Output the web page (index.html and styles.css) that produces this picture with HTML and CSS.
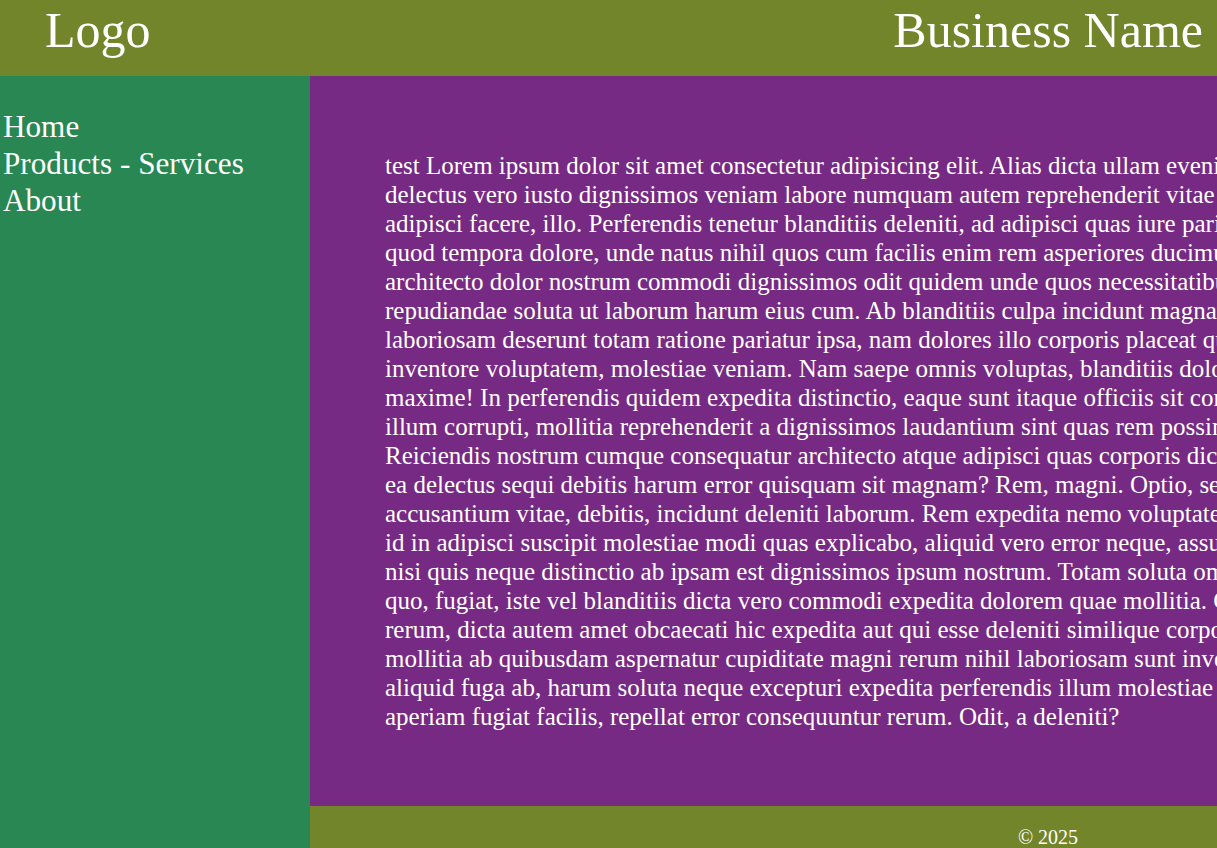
FILE: index.html
```html
<!DOCTYPE html>
<html lang="en">
<head>
<meta charset="utf-8">
<title>Business Name</title>
<link rel="stylesheet" href="styles.css">
</head>
<body>
<header class="site-header">
  <div class="logo">Logo</div>
  <div class="business-name">Business Name</div>
</header>
<div class="layout">
  <aside class="sidebar">
    <nav>
      <ul class="nav-list">
        <li><a href="#">Home</a></li>
        <li><a href="#">Products - Services</a></li>
        <li><a href="#">About</a></li>
      </ul>
    </nav>
  </aside>
  <div class="content-column">
    <main class="main">
      <p class="body-text">test Lorem ipsum dolor sit amet consectetur adipisicing elit. Alias dicta ullam eveniet nemo dolorum<br>
delectus vero iusto dignissimos veniam labore numquam autem reprehenderit vitae fuga quia<br>
adipisci facere, illo. Perferendis tenetur blanditiis deleniti, ad adipisci quas iure pariatur<br>
quod tempora dolore, unde natus nihil quos cum facilis enim rem asperiores ducimus<br>
architecto dolor nostrum commodi dignissimos odit quidem unde quos necessitatibus<br>
repudiandae soluta ut laborum harum eius cum. Ab blanditiis culpa incidunt magnam<br>
laboriosam deserunt totam ratione pariatur ipsa, nam dolores illo corporis placeat quis<br>
inventore voluptatem, molestiae veniam. Nam saepe omnis voluptas, blanditiis dolor<br>
maxime! In perferendis quidem expedita distinctio, eaque sunt itaque officiis sit corporis<br>
illum corrupti, mollitia reprehenderit a dignissimos laudantium sint quas rem possimus<br>
Reiciendis nostrum cumque consequatur architecto atque adipisci quas corporis dicta<br>
ea delectus sequi debitis harum error quisquam sit magnam? Rem, magni. Optio, sed<br>
accusantium vitae, debitis, incidunt deleniti laborum. Rem expedita nemo voluptatem<br>
id in adipisci suscipit molestiae modi quas explicabo, aliquid vero error neque, assumenda<br>
nisi quis neque distinctio ab ipsam est dignissimos ipsum nostrum. Totam soluta omnis<br>
quo, fugiat, iste vel blanditiis dicta vero commodi expedita dolorem quae mollitia. Cum<br>
rerum, dicta autem amet obcaecati hic expedita aut qui esse deleniti similique corporis<br>
mollitia ab quibusdam aspernatur cupiditate magni rerum nihil laboriosam sunt inventore<br>
aliquid fuga ab, harum soluta neque excepturi expedita perferendis illum molestiae quae<br>
aperiam fugiat facilis, repellat error consequuntur rerum. Odit, a deleniti?</p>
    </main>
    <footer class="site-footer">&copy; 2025</footer>
  </div>
</div>
</body>
</html>
```
FILE: styles.css
```css
html, body {
  margin: 0;
  padding: 0;
}

body {
  font-family: "Liberation Serif", "Times New Roman", serif;
  color: #ffffff;
  background: #288752;
}

.site-header {
  display: flex;
  justify-content: space-between;
  align-items: flex-start;
  height: 76px;
  padding: 0 14px 0 45px;
  background: #72852a;
  font-size: 50px;
  line-height: 60px;
}

.layout {
  display: flex;
  align-items: stretch;
}

.sidebar {
  flex: 0 0 310px;
  width: 310px;
  background: #288752;
}

.nav-list {
  list-style: none;
  margin: 0;
  padding: 32px 0 0 3px;
  font-size: 31.2px;
  line-height: 37px;
}

.nav-list a {
  color: #ffffff;
  text-decoration: none;
}

.content-column {
  flex: 0 0 1476px;
  width: 1476px;
  display: flex;
  flex-direction: column;
}

.main {
  background: #772a84;
  padding: 75px;
}

.body-text {
  margin: 0;
  font-size: 25px;
  line-height: 29px;
  white-space: nowrap;
}

.site-footer {
  background: #72852a;
  text-align: center;
  font-size: 20px;
  line-height: 23px;
  padding: 20px 0;
}
```
